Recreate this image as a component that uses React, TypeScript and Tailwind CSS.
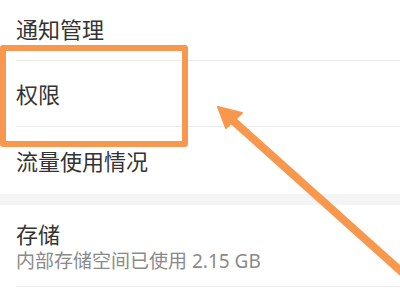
import React from 'react';

const font = { fontFamily: '"Noto Sans", "Noto Sans CJK SC", sans-serif' };

const Row: React.FC<{ title: string; sub?: string; h: string }> = ({ title, sub, h }) => (
  <div className="pl-[16px]">
    <div className={`flex flex-col justify-center border-b border-[#ececec] ${h}`}>
      <div className="text-[22px] leading-[26px] text-[#333333]">{title}</div>
      {sub && <div className="mt-[2px] text-[19px] leading-[24px] text-[#8a8a8a]">{sub}</div>}
    </div>
  </div>
);

export default function App() {
  return (
    <div className="relative h-[300px] w-[400px] overflow-hidden bg-white" style={font}>
      <div className="flex flex-col">
        <div className="-mt-[3px]">
          <Row title="通知管理" h="h-[64px]" />
        </div>
        <Row title="权限" h="h-[66px]" />
        <div className="pl-[16px]">
          <div className="flex h-[67px] items-center text-[22px] leading-[26px] text-[#333333]">流量使用情况</div>
        </div>
        <div className="h-[11px] bg-[#f4f4f4]" />
        <Row title="存储" sub="内部存储空间已使用 2.15 GB" h="h-[82px] pt-[2px]" />
      </div>

      {/* annotation: highlight box */}
      <div className="absolute left-0 top-[45px] h-[102px] w-[188px] rounded-[3px] border-[6px] border-[#f8984f]" />

      {/* annotation: arrow */}
      <svg className="absolute inset-0" width="400" height="300" viewBox="0 0 400 300">
        <line x1="230" y1="118" x2="404" y2="274" stroke="#f8984f" strokeWidth="8" />
        <polygon points="218,107 242,113 226,128" fill="#f8984f" stroke="#f8984f" strokeWidth="2" strokeLinejoin="round" />
      </svg>
    </div>
  );
}
